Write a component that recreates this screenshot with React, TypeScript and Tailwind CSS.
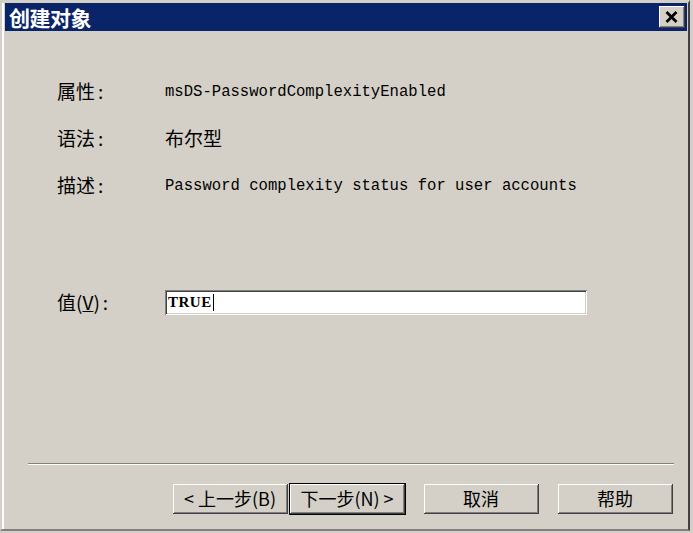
import React from 'react';

const cjk = { fontFamily: '"Noto Sans CJK SC", "Liberation Sans", sans-serif' };
const mono = { fontFamily: '"Liberation Mono", "Noto Sans CJK SC", monospace' };

function Row({ label, children }: { label: React.ReactNode; children: React.ReactNode }) {
    return (
        <div className="flex items-center h-[47px]">
            <div className="w-[108px] text-[19px] text-black flex" style={cjk}>
                {label}
                <span className="ml-[3px]">:</span>
            </div>
            <div className="flex-1">{children}</div>
        </div>
    );
}

function Btn({ children, isDefault }: { children: React.ReactNode; isDefault?: boolean }) {
    return (
        <div className={isDefault ? 'border border-black' : 'border border-transparent'}>
            <div className="border-b border-r border-[#404040]">
                <div className="border-t border-l border-white">
                    <div className="border-b border-r border-[#808080] h-[28px] w-[113px] flex items-center justify-center text-[18px] text-black" style={cjk}>
                        {children}
                    </div>
                </div>
            </div>
        </div>
    );
}

export default function App() {
    return (
        <div className="w-[693px] h-[533px] bg-[#d4d0c8] overflow-hidden">
            <div className="w-[690px] h-[531px] flex flex-col border-t-[3px] border-t-[#d4d0c8] border-l-[2px] border-l-[#d4d0c8] border-r-[2px] border-r-[#404040] border-b-[2px] border-b-[#808080]">
                <div className="border-l-[2px] border-white flex-1 flex flex-col px-[1px]">
                    {/* title bar */}
                    <div className="h-[28px] bg-[#0a246a] flex items-center justify-between pl-[4px] pr-[2px]">
                        <span className="text-white font-bold text-[21px] leading-none tracking-[-0.5px]" style={cjk}>
                            创建对象
                        </span>
                        <div className="border-b border-r border-[#404040]">
                            <div className="border-t border-l border-white">
                                <div className="w-[24px] h-[20px] bg-[#d4d0c8] border-b border-r border-[#808080] flex items-center justify-center">
                                    <svg width="13" height="12" viewBox="0 0 13 12">
                                        <path d="M1.5 1 L11.5 11 M11.5 1 L1.5 11" stroke="#000" strokeWidth="2.8" />
                                    </svg>
                                </div>
                            </div>
                        </div>
                    </div>

                    {/* body */}
                    <div className="flex-1 flex flex-col pl-[52px] pr-[96px] pt-[37px]">
                        <Row label="属性">
                            <span className="text-[15.6px] text-black" style={mono}>msDS-PasswordComplexityEnabled</span>
                        </Row>
                        <Row label="语法">
                            <span className="text-[19px] text-black" style={cjk}>布尔型</span>
                        </Row>
                        <Row label="描述">
                            <span className="text-[15.6px] text-black whitespace-nowrap" style={mono}>
                                Password complexity status for user accounts
                            </span>
                        </Row>
                        <div className="h-[70px]" />
                        <Row
                            label={
                                <span>
                                    值(<span className="underline">V</span>)
                                </span>
                            }
                        >
                            <div className="w-[422px] border-t border-l border-[#808080]">
                                <div className="border-b border-r border-white">
                                    <div className="border-t border-l border-[#404040]">
                                        <div className="border-b border-r border-[#d4d0c8] h-[22px] bg-white flex items-center pl-[1px]">
                                            <span className="text-[15px] font-bold text-black tracking-[0.5px]" style={{ fontFamily: '"Liberation Serif", serif' }}>
                                                TRUE
                                            </span>
                                            <span className="w-[1px] h-[17px] bg-black ml-[1px]" />
                                        </div>
                                    </div>
                                </div>
                            </div>
                        </Row>
                    </div>

                    {/* separator + buttons */}
                    <div className="pl-[23px] pr-[13px]">
                        <div className="border-t border-[#808080] border-b border-b-white" />
                    </div>
                    <div className="flex justify-end items-center gap-[17px] pt-[18px] pb-[14px] pr-[13px]">
                        <div className="flex">
                            <Btn>&lt; 上一步(B)</Btn>
                            <Btn isDefault>下一步(N) &gt;</Btn>
                        </div>
                        <Btn>取消</Btn>
                        <Btn>帮助</Btn>
                    </div>
                </div>
            </div>
        </div>
    );
}
